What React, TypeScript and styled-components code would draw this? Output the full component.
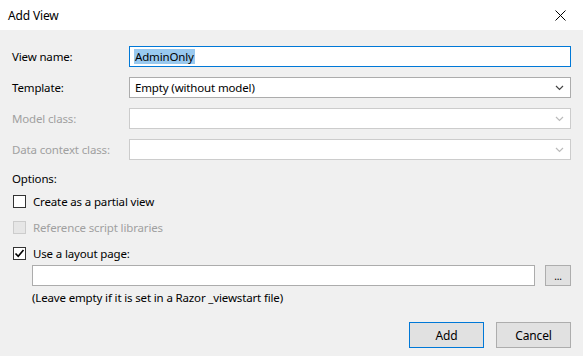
import styled, { createGlobalStyle } from "styled-components"

const GlobalStyle = createGlobalStyle`
    html, body {
        margin: 0;
        padding: 0;
        background: #f0f0f0;
    }
    body {
        font-family: "Noto Sans", "Open Sans", "DejaVu Sans", sans-serif;
        font-size: 11.5px;
        letter-spacing: -0.15px;
        color: #000;
    }
`

const Window = styled.div`
    width: 583px;
    height: 356px;
    display: flex;
    flex-direction: column;
    background: #f0f0f0;
    overflow: hidden;
`

const TitleBar = styled.div`
    height: 30px;
    background: #fff;
    display: flex;
    align-items: center;
    justify-content: space-between;
    padding: 0 0 0 8px;
    box-sizing: border-box;
`

const TitleText = styled.span`
    font-size: 12px;
    color: #000;
`

const CloseButton = styled.div`
    width: 46px;
    height: 30px;
    display: flex;
    align-items: center;
    justify-content: center;
`

const Body = styled.div`
    flex: 1;
    display: flex;
    flex-direction: column;
    padding: 16px 12px 0 12px;
`

const FieldRow = styled.div`
    display: grid;
    grid-template-columns: 117px 1fr;
    align-items: center;
    height: 21px;
    margin-bottom: 10px;
`

const Label = styled.label<{ disabled?: boolean }>`
    color: ${({ disabled }) => (disabled ? "#a0a0a0" : "#000")};
    white-space: nowrap;
`

const TextBox = styled.div<{ focused?: boolean }>`
    height: 21px;
    box-sizing: border-box;
    border: 1px solid ${({ focused }) => (focused ? "#0078d7" : "#7a7a7a")};
    background: #fff;
    display: flex;
    align-items: center;
    padding-left: 4px;
`

const Selected = styled.span`
    background: #99c9ef;
    color: #000;
    line-height: 15px;
    padding: 0 1px;
`

const Select = styled.div<{ disabled?: boolean }>`
    height: 21px;
    box-sizing: border-box;
    border: 1px solid ${({ disabled }) => (disabled ? "#cccccc" : "#acacac")};
    background: #fff;
    display: flex;
    align-items: center;
    justify-content: space-between;
    padding: 0 6px 0 5px;
`

const SectionTitle = styled.div`
    margin-top: -2px;
    height: 20px;
    display: flex;
    align-items: center;
`

const CheckRow = styled.div<{ disabled?: boolean }>`
    display: flex;
    align-items: center;
    gap: 7px;
    height: 26px;
    margin-left: 1px;
    color: ${({ disabled }) => (disabled ? "#a0a0a0" : "#000")};
`

const Box = styled.span<{ disabled?: boolean }>`
    width: 13px;
    height: 13px;
    box-sizing: border-box;
    border: 1px solid ${({ disabled }) => (disabled ? "#cccccc" : "#333333")};
    background: ${({ disabled }) => (disabled ? "#e6e6e6" : "#fff")};
    display: flex;
    align-items: center;
    justify-content: center;
`

const Indented = styled.div`
    margin-top: -1px;
    padding-left: 20px;
    display: flex;
    flex-direction: column;
`

const PathRow = styled.div`
    display: flex;
    align-items: center;
    gap: 10px;
    height: 21px;
`

const PathBox = styled.div`
    flex: 1;
    height: 21px;
    box-sizing: border-box;
    border: 1px solid #acacac;
    background: #fff;
`

const Hint = styled.div`
    margin-top: 2px;
    height: 18px;
    display: flex;
    align-items: center;
`

const ButtonBar = styled.div`
    display: flex;
    justify-content: flex-end;
    gap: 12px;
    margin-top: 16px;
`

const Button = styled.div<{ primary?: boolean; small?: boolean }>`
    width: ${({ small }) => (small ? "26px" : "75px")};
    height: ${({ small }) => (small ? "21px" : "26px")};
    box-sizing: border-box;
    background: #e1e1e1;
    border: 1px solid ${({ primary }) => (primary ? "#0078d7" : "#adadad")};
    display: flex;
    align-items: center;
    justify-content: center;
    font-size: ${({ small }) => (small ? "10px" : "12px")};
`

function Chevron({ color }: { color: string }) {
    return (
        <svg width="9" height="6" viewBox="0 0 9 6">
            <path d="M1 1 L4.5 4.5 L8 1" fill="none" stroke={color} strokeWidth="1.2" />
        </svg>
    )
}

function Check() {
    return (
        <svg width="11" height="11" viewBox="0 0 11 11">
            <path d="M1.5 5.5 L4.2 8.3 L9.5 2" fill="none" stroke="#000" strokeWidth="1.6" />
        </svg>
    )
}

export default function App() {
    return (
        <Window>
            <GlobalStyle />
            <TitleBar>
                <TitleText>Add View</TitleText>
                <CloseButton>
                    <svg width="11" height="11" viewBox="0 0 11 11">
                        <path d="M0.5 0.5 L10.5 10.5 M10.5 0.5 L0.5 10.5" stroke="#000" strokeWidth="1" />
                    </svg>
                </CloseButton>
            </TitleBar>
            <Body>
                <FieldRow>
                    <Label>View name:</Label>
                    <TextBox focused>
                        <Selected>AdminOnly</Selected>
                    </TextBox>
                </FieldRow>
                <FieldRow>
                    <Label>Template:</Label>
                    <Select>
                        <span>Empty (without model)</span>
                        <Chevron color="#444" />
                    </Select>
                </FieldRow>
                <FieldRow>
                    <Label disabled>Model class:</Label>
                    <Select disabled>
                        <span />
                        <Chevron color="#bbb" />
                    </Select>
                </FieldRow>
                <FieldRow>
                    <Label disabled>Data context class:</Label>
                    <Select disabled>
                        <span />
                        <Chevron color="#bbb" />
                    </Select>
                </FieldRow>
                <SectionTitle>Options:</SectionTitle>
                <CheckRow>
                    <Box />
                    <span>Create as a partial view</span>
                </CheckRow>
                <CheckRow disabled>
                    <Box disabled />
                    <span>Reference script libraries</span>
                </CheckRow>
                <CheckRow>
                    <Box>
                        <Check />
                    </Box>
                    <span>Use a layout page:</span>
                </CheckRow>
                <Indented>
                    <PathRow>
                        <PathBox />
                        <Button small>...</Button>
                    </PathRow>
                    <Hint>(Leave empty if it is set in a Razor _viewstart file)</Hint>
                </Indented>
                <ButtonBar>
                    <Button primary>Add</Button>
                    <Button>Cancel</Button>
                </ButtonBar>
            </Body>
        </Window>
    )
}
